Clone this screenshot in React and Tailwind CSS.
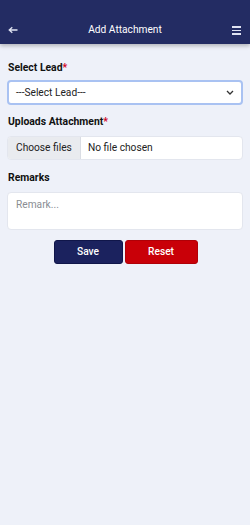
export default function App() {
  return (
    <div className="w-[250px] h-[525px] bg-[#eef1f9] font-['Roboto',sans-serif] overflow-hidden">
      <div className="h-[44px] bg-[#232c63] flex items-end pb-[7px] px-[8px] shadow-[0_2px_4px_rgba(0,0,0,0.25)] relative">
        <svg width="10" height="8" viewBox="0 0 10 8" className="mb-[3px]">
          <path d="M9.5 4H1.5M4.3 1.2L1.2 4L4.3 6.8" stroke="#dfe3f2" strokeWidth="1.3" fill="none" />
        </svg>
        <div className="flex-1 text-center text-white text-[10.2px] leading-[14px]">Add Attachment</div>
        <div className="flex flex-col gap-[2px] mb-[2px] mr-[1px]">
          <div className="w-[9px] h-[1.6px] bg-[#dfe3f2]" />
          <div className="w-[9px] h-[1.6px] bg-[#dfe3f2]" />
          <div className="w-[9px] h-[1.6px] bg-[#dfe3f2]" />
        </div>
      </div>
      <div className="px-[7px] pt-[17px]">
        <div className="text-[10.4px] font-bold text-[#111] leading-[14px] pl-[1px]">
          Select Lead<span className="text-[#d0021b]">*</span>
        </div>
        <div className="mt-[5px] h-[25px] bg-white rounded-[4px] border-[2px] border-[#a9c2f2] flex items-center pl-[7px] pr-[7px]">
          <span className="flex-1 text-[10.2px] text-[#222]">---Select Lead---</span>
          <svg width="8" height="5" viewBox="0 0 8 5">
            <path d="M1 1L4 4L7 1" stroke="#333" strokeWidth="1.3" fill="none" />
          </svg>
        </div>
        <div className="mt-[10px] text-[10.4px] font-bold text-[#111] leading-[14px] pl-[1px]">
          Uploads Attachment<span className="text-[#d0021b]">*</span>
        </div>
        <div className="mt-[7px] h-[24px] bg-white rounded-[4px] border border-[#e3e6ee] flex items-center overflow-hidden">
          <div className="h-full w-[73px] bg-[#e9ebef] pl-[8px] flex items-center text-[10.2px] text-[#222] border-r border-[#dadde4]">Choose files</div>
          <div className="pl-[7px] text-[10.2px] text-[#222]">No file chosen</div>
        </div>
        <div className="mt-[11px] text-[10.4px] font-bold text-[#111] leading-[14px] pl-[1px]">Remarks</div>
        <div className="mt-[7px] h-[38px] bg-white rounded-[4px] border border-[#e3e6ee] px-[8px] pt-[4px] text-[10.2px] text-[#8a8d93]">Remark...</div>
        <div className="mt-[10px] flex justify-center gap-[2px] pl-[1px]">
          <button className="w-[69px] h-[24px] rounded-[3px] bg-[#1b225e] border border-[#10164a] text-white text-[10.2px] font-medium">Save</button>
          <button className="w-[73px] h-[24px] rounded-[3px] bg-[#c90008] border border-[#b00007] text-white text-[10.2px] font-medium">Reset</button>
        </div>
      </div>
    </div>
  );
}
